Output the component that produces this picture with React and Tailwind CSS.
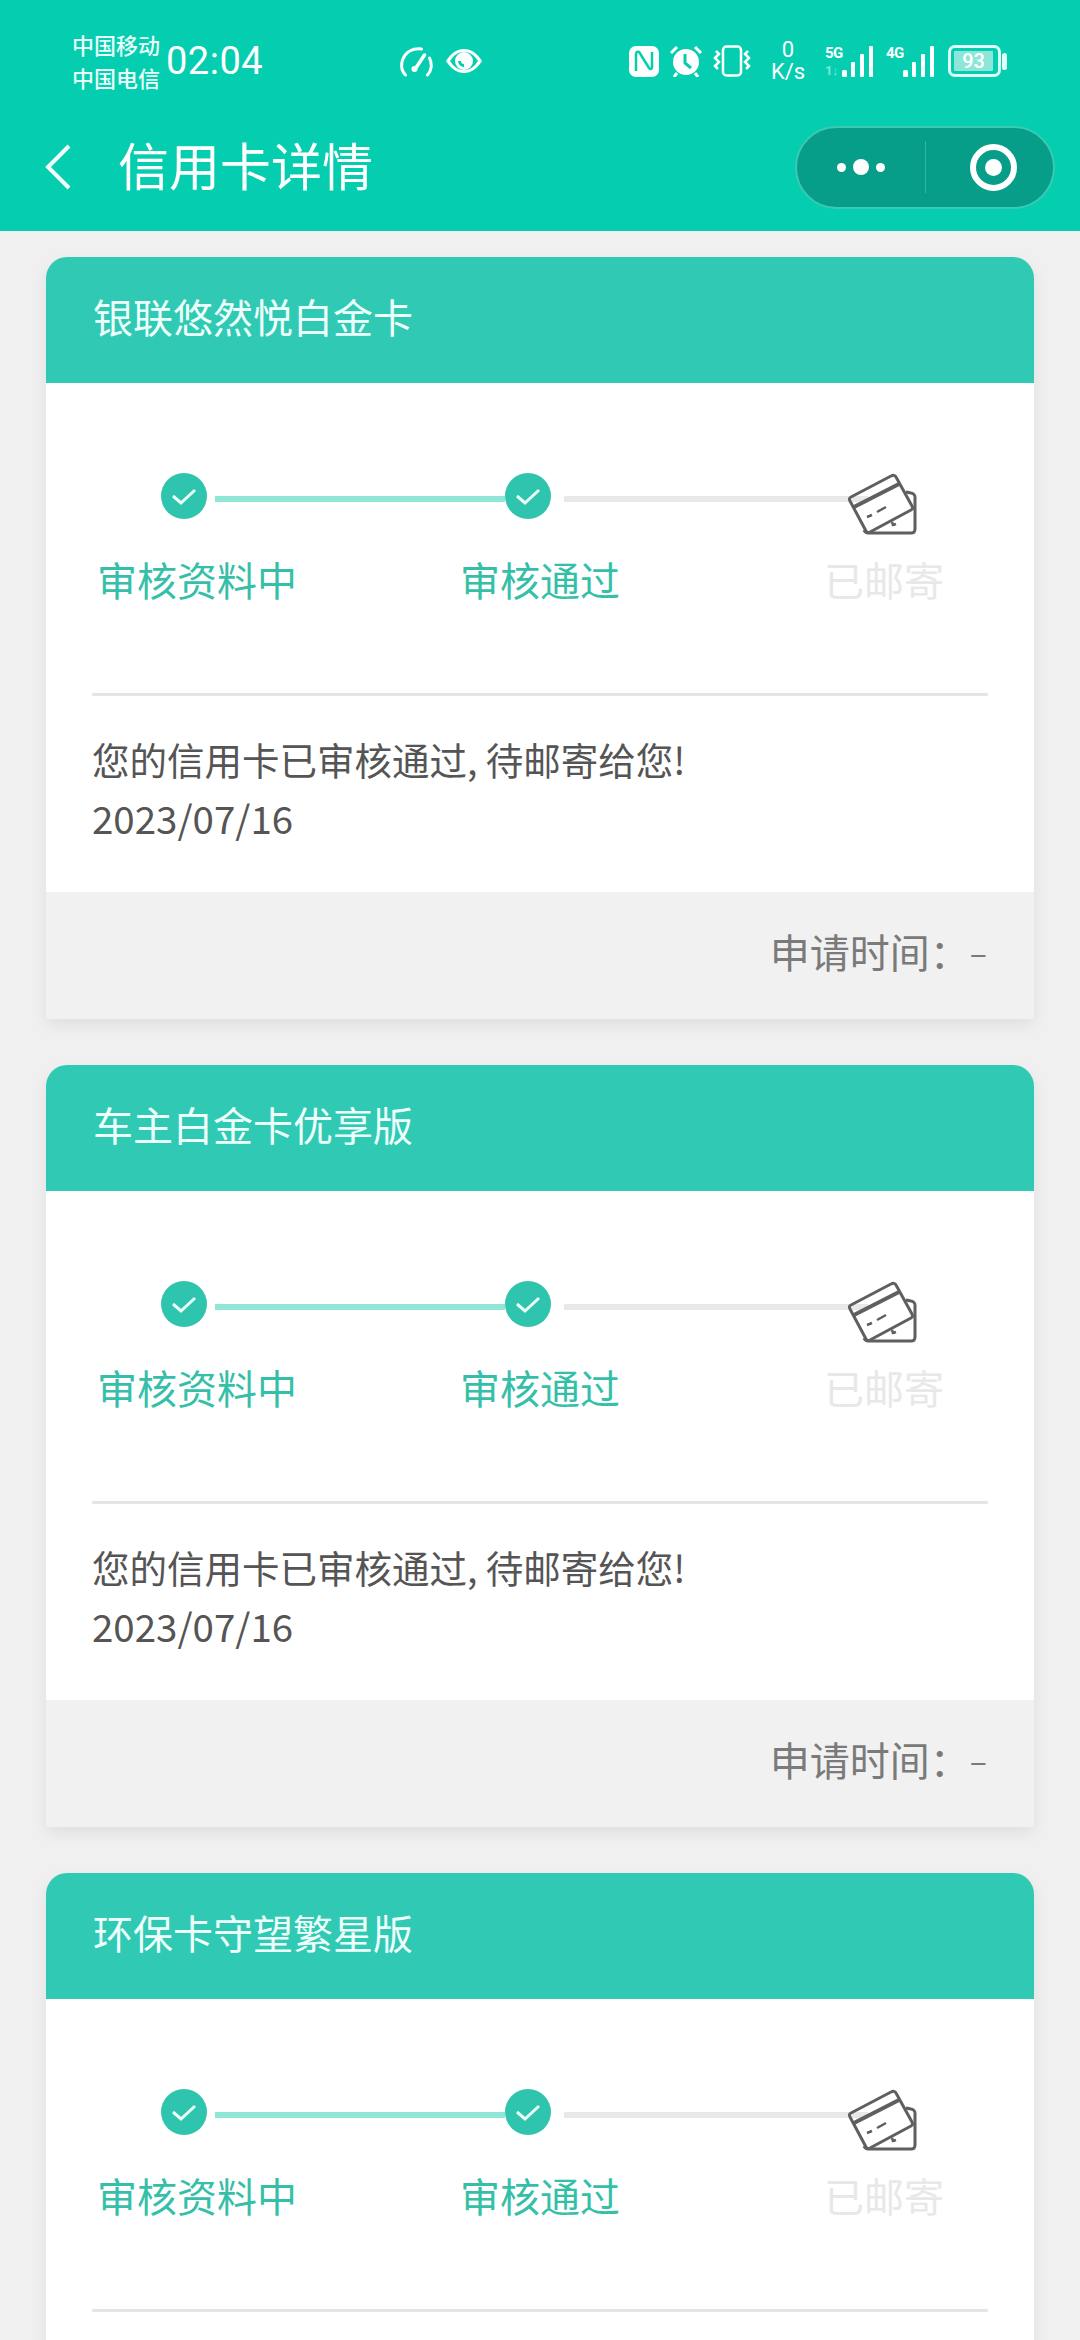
const cards = ["银联悠然悦白金卡", "车主白金卡优享版", "环保卡守望繁星版"];

const SignalBars = () => (
  <svg width="32" height="31" viewBox="0 0 32 31" fill="#fff">
    <rect x="0" y="24" width="5" height="7" rx="1.5" />
    <rect x="9" y="16" width="4" height="15" rx="1" />
    <rect x="18" y="8" width="4" height="23" rx="1" />
    <rect x="27" y="0" width="4" height="31" rx="1" />
  </svg>
);

const StatusBar = () => (
  <div className="h-[103px] pt-[19px] pl-[72px] flex items-center text-white">
    <div className="w-[88px] text-[22px] leading-[33px] font-medium text-[#e8fffa]">
      <div>中国移动</div>
      <div>中国电信</div>
    </div>
    <span className="ml-[6px] w-[98px] font-['Roboto',sans-serif] text-[38px] leading-none tracking-[0.5px]">
      02:04
    </span>
    {/* speed */}
    <svg className="ml-[135px]" width="35" height="31" viewBox="0 0 34 31" fill="none" stroke="#fff" strokeWidth="3" strokeLinecap="round">
      <path d="M6 29C2 25 1.500 19 3 14 6 6 13 2 22 3" />
      <path d="M30 12C33 18 32 25 28 29" />
      <path d="M15 24 25 9" strokeWidth="3.500" />
      <circle cx="15" cy="23" r="3" fill="#fff" stroke="none" />
    </svg>
    {/* eye */}
    <svg className="ml-[11px]" width="38" height="26" viewBox="0 0 38 26">
      <path d="M1 13C6 5 12 1 19 1s13 4 18 12c-5 8-11 12-18 12S6 21 1 13Z" fill="#fff" />
      <path d="M5 13C9 7 13 4 19 4s10 3 14 9c-4 6-8 9-14 9S9 19 5 13Z" fill="#05ceb0" />
      <circle cx="19" cy="13" r="9" fill="#fff" />
      <path d="M13 13a6 6 0 0 0 6 6v-3a3 3 0 0 1-3-3Z" fill="#05ceb0" />
    </svg>
    {/* nfc */}
    <svg className="ml-[146px]" width="30" height="31" viewBox="0 0 30 31">
      <rect x="0" y="0" width="30" height="31" rx="7" fill="#fff" />
      <path d="M7 25V8c0-2 2-3 3.500-1.500L20 22c1.500 2 3 1 3-1V6" fill="none" stroke="#05ceb0" strokeWidth="2.500" />
    </svg>
    {/* alarm */}
    <svg className="ml-[10px]" width="34" height="32" viewBox="0 0 34 32">
      <circle cx="17" cy="17" r="13" fill="#fff" />
      <path d="M16 9v9l6 5" fill="none" stroke="#05ceb0" strokeWidth="3" />
      <path d="M2 8 8 2M32 8l-6-6M8 28l-3 4M26 28l3 4" stroke="#fff" strokeWidth="3" />
    </svg>
    {/* vibrate */}
    <svg className="ml-[10px]" width="38" height="32" viewBox="0 0 38 32" fill="none" stroke="#fff">
      <rect x="10" y="1.500" width="18" height="29" rx="3.500" strokeWidth="2.500" />
      <path d="M3 6 6 9 2 13 6 17 2 21 5 24" strokeWidth="2.500" />
      <path d="M35 6 32 9 36 13 32 17 36 21 33 24" strokeWidth="2.500" />
    </svg>
    <div className="ml-[20px] w-[34px] font-['Roboto',sans-serif] text-[22px] leading-[22px] text-center text-white flex flex-col items-center">
      <span>0</span>
      <span>K/s</span>
    </div>
    <div className="ml-[20px] w-[17px] flex flex-col text-[15px] leading-[15px] tracking-[-0.5px] font-bold font-['Roboto',sans-serif]">
      <span>5G</span>
      <span className="mt-[3px] text-[13px] leading-[13px] text-[#7fe6d6]">1↓</span>
    </div>
    <SignalBars />
    <span className="ml-[12px] w-[17px] self-start mt-[27px] text-[15px] leading-[15px] tracking-[-0.5px] font-bold font-['Roboto',sans-serif]">
      4G
    </span>
    <SignalBars />
    <div className="ml-[13px] w-[53px] h-[32px] p-[3px] border-[3px] border-[#dffff8] rounded-[7px] flex">
      <div className="w-[39px] bg-[#8ee6d8] rounded-[1px] flex items-center justify-center font-['Roboto',sans-serif] text-[20px] leading-none font-medium">
        93
      </div>
    </div>
    <div className="ml-px w-[5px] h-[17px] rounded-full bg-[#dffff8]" />
  </div>
);

const NavBar = () => (
  <div className="h-[128px] flex items-center pl-[45px] pr-[25px] text-white">
    <svg width="26" height="46" viewBox="0 0 26 46" fill="none" stroke="#f4fffd" strokeWidth="4">
      <path d="M24 2 3 23l21 21" />
    </svg>
    <span className="ml-[47px] mb-[6px] text-[51px] leading-none">信用卡详情</span>
    <div className="ml-auto w-[260px] h-[83px] rounded-full bg-[#079e89] border-2 border-[#3cc9b4] flex items-center">
      <div className="w-[128px] flex items-center justify-center gap-[7px]">
        <span className="w-[9px] h-[9px] rounded-full bg-white" />
        <span className="w-[16px] h-[16px] rounded-full bg-white" />
        <span className="w-[9px] h-[9px] rounded-full bg-white" />
      </div>
      <div className="w-px h-[52px] bg-[#2cb8a3]" />
      <div className="flex-1 pl-[7px] flex justify-center">
        <div className="w-[47px] h-[47px] rounded-full border-[6px] border-white flex items-center justify-center">
          <span className="w-[17px] h-[17px] rounded-full bg-white" />
        </div>
      </div>
    </div>
  </div>
);

const Check = () => (
  <div className="w-[46px] h-[46px] shrink-0 rounded-full bg-[#2ec4ae] flex items-center justify-center">
    <svg width="26" height="20" viewBox="0 0 26 20" fill="none" stroke="#eafffa" strokeWidth="3">
      <path d="M2 10l8 7L24 4" />
    </svg>
  </div>
);

const CardIcon = () => (
  <svg className="ml-[-22px] mt-[-3px] shrink-0" width="74" height="66" viewBox="845 470 74 66" fill="none" stroke="#5f5f5f" strokeWidth="3" strokeLinejoin="round">
    <path d="M905 492l5 1c2 0 4 2 4 4v32c0 2-1 4-4 4h-43c-2 0-3-1-4-3" />
    <path d="M850 497l40-21c2-1 4-1 5 1l16 29c1 2 1 3-1 4l-41 22c-2 1-3 1-4-1l-16-30c-1-2-1-3 1-4Z" />
    <path d="M853 507l45-23" strokeWidth="4" />
    <path d="M866 517l5-2M876 512l9-5" strokeWidth="2.500" />
    <path d="M891 522l1 3 3-1" strokeWidth="2.500" />
  </svg>
);

const Card = ({ title }) => (
  <div className="rounded-t-[21px] overflow-hidden shadow-[0_6px_16px_rgba(0,0,0,0.07)]">
    <div className="h-[126px] bg-[#30c9b3] px-[47px] pb-[9px] flex items-center text-[40px] leading-none text-[#edfffb]">
      {title}
    </div>
    <div className="bg-white pt-[90px]">
      <div className="h-[61px] pl-[115px] flex items-start">
        <Check />
        <div className="ml-[8px] mt-[23px] w-[290px] h-[6px] bg-[#8fe6d6]" />
        <Check />
        <div className="ml-[13px] mt-[23px] w-[304px] h-[6px] bg-[#e8e8e8]" />
        <CardIcon />
      </div>
      <div className="mt-[17px] pl-[51px] flex text-[40px] leading-[56px]">
        <span className="w-[363px] text-[#35bfa9]">审核资料中</span>
        <span className="w-[364px] text-[#35bfa9]">审核通过</span>
        <span className="text-[#e8e8e8]">已邮寄</span>
      </div>
      <div className="mx-[46px] mt-[86px] h-[3px] bg-[#e5e5e5]" />
      <div className="px-[46px] pt-[33px] pb-[45px] leading-[59px] text-[#555555]">
        <div className="text-[37.5px]">您的信用卡已审核通过, 待邮寄给您!</div>
        <div className="text-[38.5px]">2023/07/16</div>
      </div>
    </div>
    <div className="h-[127px] bg-[#f1f1f1] pr-[47px] pb-[10px] flex items-center justify-end text-[40px] leading-none text-[#7a7a7a]">
      申请时间：<span className="text-[32px]">–</span>
    </div>
  </div>
);

export default function App() {
  return (
    <div className="h-[2340px] overflow-hidden bg-[#f0f0f0] font-['Noto_Sans_CJK_SC','Noto_Sans',sans-serif]">
      <div className="h-[231px] bg-[#05ceb0]">
        <StatusBar />
        <NavBar />
      </div>
      <div className="px-[46px] pt-[26px] flex flex-col gap-[46px]">
        {cards.map((title) => (
          <Card key={title} title={title} />
        ))}
      </div>
    </div>
  );
}
